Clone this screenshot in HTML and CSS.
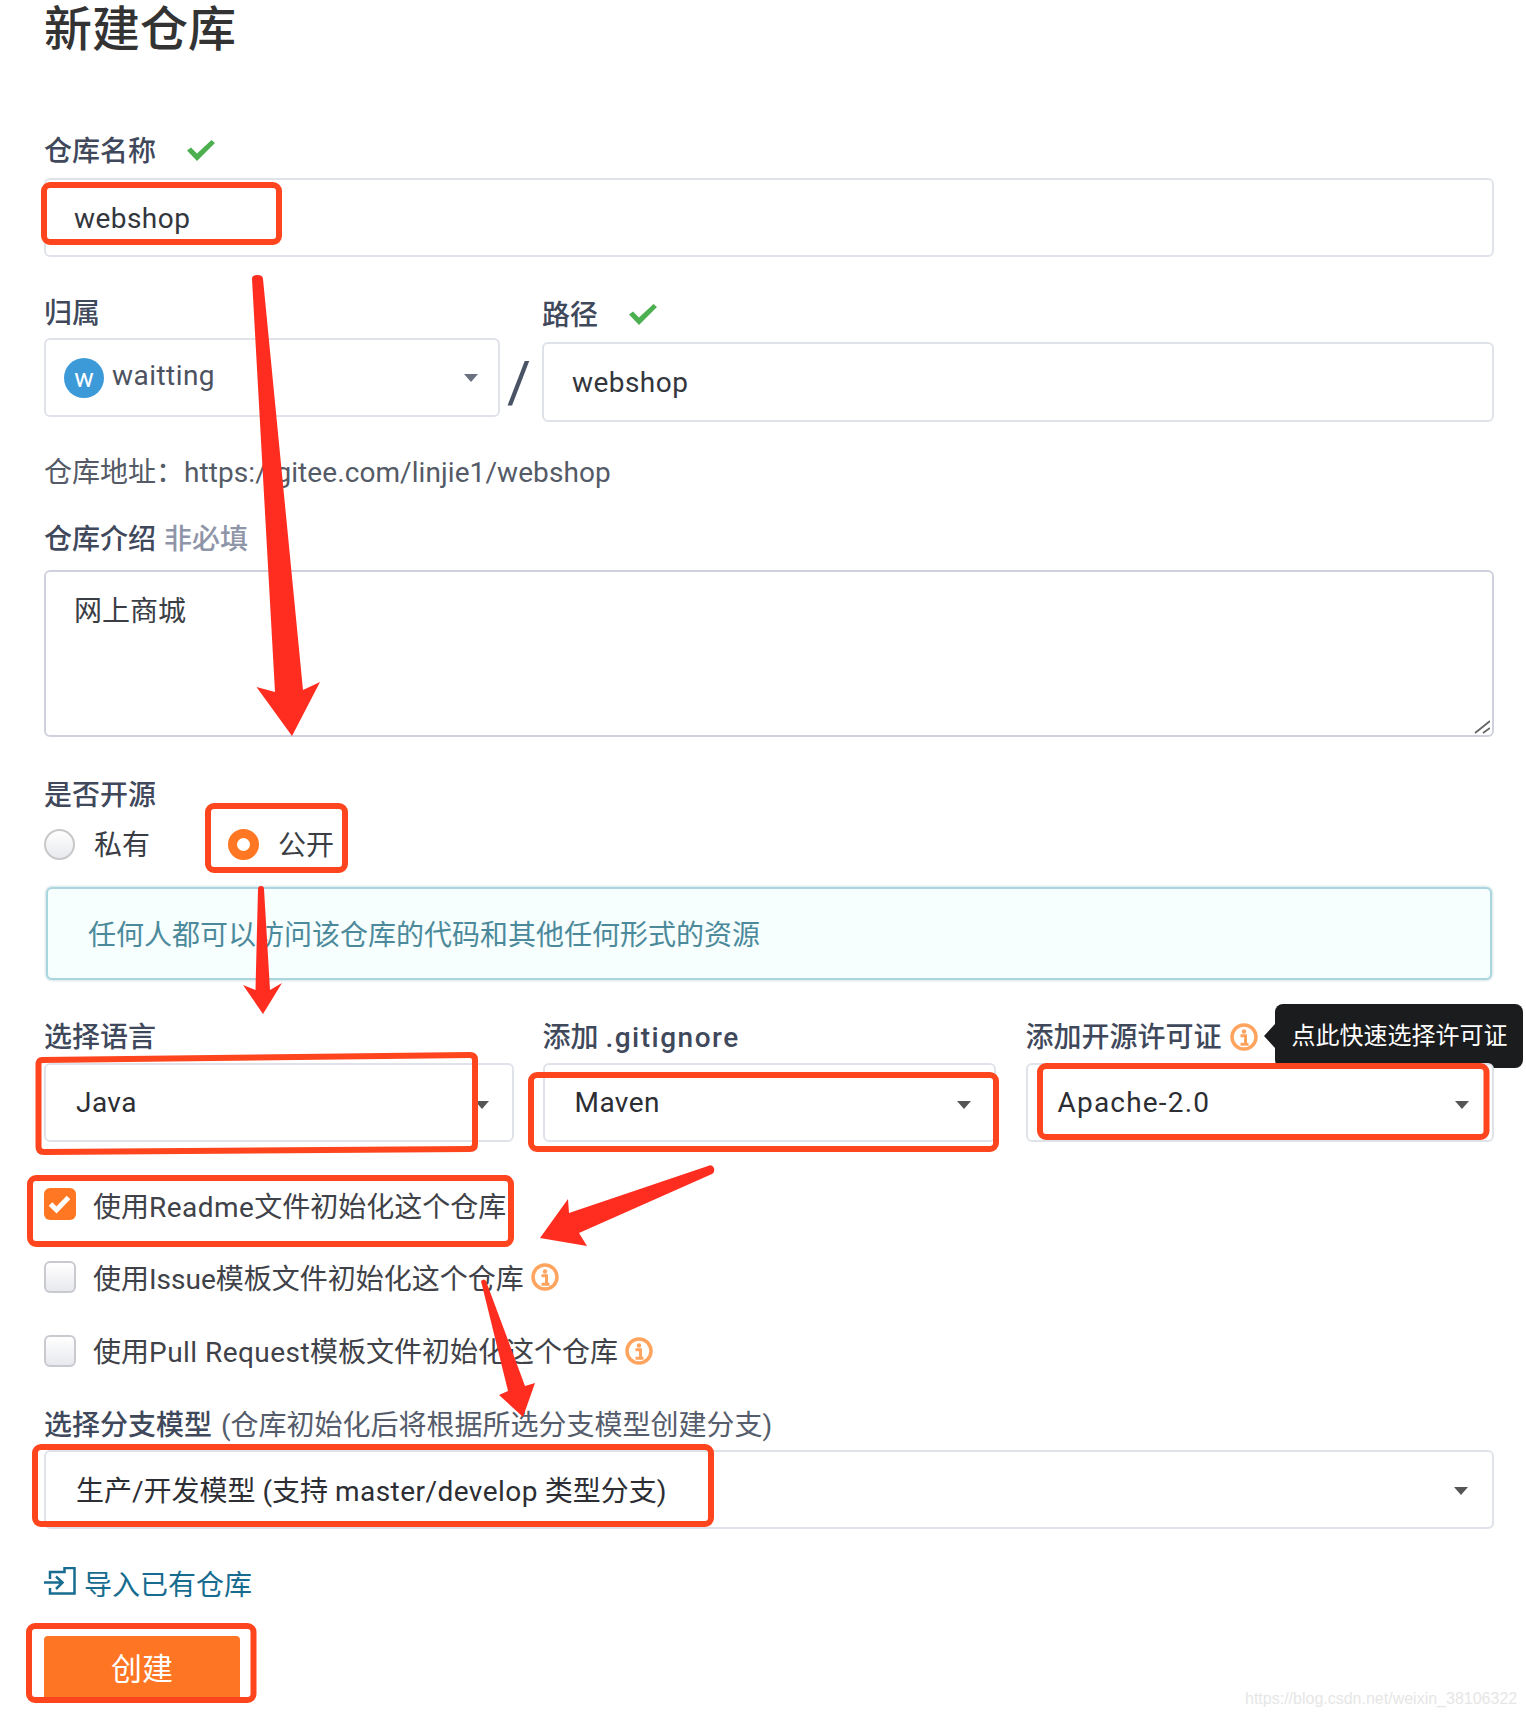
FILE: index.html
```html
<!DOCTYPE html>
<html lang="zh-CN">
<head>
<meta charset="utf-8">
<title>新建仓库</title>
<link rel="stylesheet" href="styles.css">
</head>
<body>
<main class="page">
  <h1 class="title">新建仓库</h1>

  <div class="label label-first"><span>仓库名称</span>
    <svg class="ok" viewBox="0 0 29 21"><path d="M1 10.500L5 7.500 11 13.500 25.500 0 29 3 11 21Z" /></svg>
  </div>
  <div class="field"><span class="value latin">webshop</span></div>

  <div class="owner-row">
    <div class="owner-col">
      <div class="label">归属</div>
      <div class="field select owner">
        <span class="avatar">w</span>
        <span class="owner-name latin">waitting</span>
        <span class="caret caret-light"></span>
      </div>
    </div>
    <span class="slash">/</span>
    <div class="path-col">
      <div class="label label-path"><span>路径</span>
        <svg class="ok" viewBox="0 0 29 21"><path d="M1 10.500L5 7.500 11 13.500 25.500 0 29 3 11 21Z" /></svg>
      </div>
      <div class="field field-path"><span class="value latin">webshop</span></div>
    </div>
  </div>

  <div class="address">仓库地址：<span class="url">https://gitee.com/linjie1/webshop</span></div>

  <div class="label label-intro"><span>仓库介绍</span><span class="optional">非必填</span></div>
  <div class="textarea">网上商城
    <svg class="grip" viewBox="0 0 16 14"><path d="M1 13L16 1M9 13L16 8" /></svg>
  </div>

  <div class="label label-open">是否开源</div>
  <div class="radios">
    <div class="radio-item"><span class="radio"></span><span class="radio-text">私有</span></div>
    <div class="radio-item"><span class="radio radio-on"></span><span class="radio-text">公开</span></div>
  </div>

  <div class="notice">任何人都可以访问该仓库的代码和其他任何形式的资源</div>

  <div class="triple">
    <div>
      <div class="label">选择语言</div>
      <div class="field select"><span class="value value-sel latin">Java</span><span class="caret"></span></div>
    </div>
    <div>
      <div class="label"><span>添加 <span class="latin-bold">.gitignore</span></span></div>
      <div class="field select"><span class="value value-sel latin">Maven</span><span class="caret"></span></div>
    </div>
    <div class="license">
      <div class="label"><span>添加开源许可证</span>
        <svg class="info info-label" viewBox="0 0 28 28"><circle cx="14" cy="14" r="12" /><circle class="dot" cx="14" cy="8.500" r="2.200" /><path d="M10.500 12.800H15.500V21M10.500 21.200H18.500" /></svg>
      </div>
      <div class="tooltip">点此快速选择许可证</div>
      <div class="field select"><span class="value value-sel latin-wide">Apache-2.0</span><span class="caret"></span></div>
    </div>
  </div>

  <div class="check-row row-a">
    <span class="box box-on"><svg viewBox="0 0 32 32"><path d="M6.500 16L12.500 22 24.500 9.500" /></svg></span>
    <span class="check-text">使用<span class="latin">Readme</span>文件初始化这个仓库</span>
  </div>
  <div class="check-row row-b">
    <span class="box"></span>
    <span class="check-text">使用Issue模板文件初始化这个仓库</span>
    <svg class="info" viewBox="0 0 28 28"><circle cx="14" cy="14" r="12" /><circle class="dot" cx="14" cy="8.500" r="2.200" /><path d="M10.500 12.800H15.500V21M10.500 21.200H18.500" /></svg>
  </div>
  <div class="check-row row-c">
    <span class="box"></span>
    <span class="check-text">使用<span class="latin">Pull Request</span>模板文件初始化这个仓库</span>
    <svg class="info" viewBox="0 0 28 28"><circle cx="14" cy="14" r="12" /><circle class="dot" cx="14" cy="8.500" r="2.200" /><path d="M10.500 12.800H15.500V21M10.500 21.200H18.500" /></svg>
  </div>

  <div class="label label-branch"><span>选择分支模型</span><span class="hint">(仓库初始化后将根据所选分支模型创建分支)</span></div>
  <div class="field select branch"><span class="value value-sel">生产/开发模型 (支持 <span class="latin">master/develop</span> 类型分支)</span><span class="caret"></span></div>

  <a class="import" href="#">
    <svg viewBox="0 0 32 28"><path d="M6 12V5H20.500V1H30.500V26.500H6V21M0 15.500H18M12 9.500L18.500 15.500 12 22" /></svg>
    <span>导入已有仓库</span>
  </a>

  <button class="create" type="button">创建</button>
</main>

<div class="watermark">https://blog.csdn.net/weixin_38106322</div>

<svg class="marks" viewBox="0 0 1526 1718">
  <g class="frames">
    <rect x="44" y="185" width="235" height="57" rx="6" />
    <rect x="208" y="806" width="137" height="64" rx="6" />
    <path d="M42 1060L470 1055Q475 1055 475 1060V1144Q475 1149 470 1149L44 1152Q38.500 1152 38.500 1147V1065Q38.500 1060 42 1060Z" />
    <rect x="531" y="1075" width="465" height="74" rx="6" />
    <rect x="1040" y="1066" width="446.500" height="71" rx="6" />
    <rect x="30" y="1178" width="481" height="66" rx="6" />
    <rect x="35" y="1447" width="676" height="77" rx="6" />
    <rect x="29" y="1626" width="224.500" height="74" rx="6" />
  </g>
  <g class="arrows">
    <path d="M252 279Q252 275 257 275Q263 275 263 279L303 690L320 682L292 736L256.500 687L275 692Z" />
    <path d="M258 889Q258 886 261 886Q264 886 264 889L270 990L282 983L263 1014L243 985L255.500 990Z" />
    <path d="M708 1166Q712 1164 714 1168Q715 1172 712 1174L579 1233L587 1246L540 1238L568 1199L569 1213Z" />
    <path d="M481 1281Q484 1278 486 1281L525 1386L535 1383L523 1417L499 1395L508 1391Z" />
  </g>
</svg>
</body>
</html>
```

FILE: styles.css
```css
* { box-sizing: border-box; }

html, body {
  margin: 0;
  padding: 0;
  background: #fff;
}

body {
  position: relative;
  height: 1718px;
  overflow: hidden;
  font-family: Roboto, "Noto Sans CJK SC", sans-serif;
  font-size: 28px;
  color: #3a3d44;
}

.page {
  width: 1450px;
  margin-left: 44px;
}

.title {
  margin: 0;
  height: 58px;
  padding-top: 1px;
  font-size: 48px;
  line-height: 58px;
  font-weight: 500;
  color: #333;
}

.label {
  display: flex;
  align-items: center;
  height: 34px;
  margin-bottom: 9px;
  padding-top: 3px;
  font-size: 28px;
  line-height: 34px;
  font-weight: 500;
  color: #40485b;
  white-space: pre;
}

.label-first { margin-top: 75px; margin-bottom: 11px; }
.label-path { margin-bottom: 11px; }
.label-intro { margin-top: 31px; margin-bottom: 15px; }
.label-open { margin-top: 40px; margin-bottom: 18px; }
.label-branch { margin-top: 40px; margin-bottom: 9px; }

.triple .label { padding-top: 1px; }

.latin { letter-spacing: 0.45px; }
.latin-wide { letter-spacing: 1.200px; }
.latin-bold { letter-spacing: 1.500px; }
.url { letter-spacing: 0.08px; }

.ok {
  width: 29px;
  height: 21px;
  margin-left: 30px;
  margin-top: -3px;
  fill: #4caf50;
}

.field {
  position: relative;
  display: flex;
  align-items: center;
  height: 79px;
  padding: 0 28px;
  border: 2px solid #dfe3e9;
  border-radius: 6px;
  background: #fff;
}

.value {
  position: relative;
  top: 1px;
  color: #33363c;
}

.field-path .value { top: 0; }

.value-sel {
  top: 0;
  padding-left: 2px;
  color: #2c2e33;
}

.owner-row {
  display: flex;
  margin-top: 38px;
}

.owner-col { width: 456px; }

.owner {
  padding: 0 18px;
}

.avatar {
  display: flex;
  align-items: center;
  justify-content: center;
  width: 40px;
  height: 40px;
  border-radius: 50%;
  background: #3d9ad9;
  color: #fff;
  font-size: 26px;
  line-height: 40px;
}

.owner-name {
  margin-left: 8px;
  margin-top: -5px;
  color: #4d5260;
}

.slash {
  width: 38px;
  height: 50px;
  margin-top: 62px;
  margin-right: 4px;
  text-align: center;
  font-size: 58px;
  line-height: 50px;
  font-weight: 400;
  color: #4a5366;
}

.path-col {
  flex: 1;
  padding-top: 2px;
}

.field-path { height: 80px; }

.caret {
  position: absolute;
  right: 23px;
  top: 36px;
  width: 0;
  height: 0;
  border-left: 7px solid transparent;
  border-right: 7px solid transparent;
  border-top: 8px solid #555;
}

.caret-light {
  right: 20px;
  top: 34px;
  border-top-color: #6a7080;
}

.address {
  height: 34px;
  margin-top: 34px;
  line-height: 34px;
  color: #545a66;
}

.optional {
  margin-left: 8px;
  color: #8f95a8;
}

.textarea {
  position: relative;
  height: 167px;
  padding: 22px 28px;
  border: 2px solid #cfd2dc;
  border-radius: 6px;
  line-height: 36px;
  color: #3a3d44;
}

.grip {
  position: absolute;
  right: 2px;
  bottom: 1px;
  width: 16px;
  height: 14px;
}

.grip path {
  fill: none;
  stroke: #666;
  stroke-width: 1.800;
}

.radios {
  display: flex;
  height: 31px;
}

.radio-item {
  display: flex;
  align-items: center;
  line-height: 31px;
  color: #3a3d44;
}

.radio-item + .radio-item { margin-left: 78px; }

.radio-text {
  position: relative;
  top: 1px;
}

.radio {
  width: 31px;
  height: 31px;
  margin-right: 19px;
  border: 2px solid #c8c8c8;
  border-radius: 50%;
  background: linear-gradient(#fff, #e8e9ee);
}

.radio-on {
  margin-right: 19px;
  border: 9px solid #ff7722;
  background: #fff;
}

.notice {
  display: flex;
  align-items: center;
  width: 1446px;
  height: 93px;
  margin: 27px 0 0 2px;
  padding: 0 0 2px 40px;
  border: 2px solid #a9d5de;
  border-radius: 6px;
  background: #f6fefe;
  box-shadow: 0 0 0 1.500px #e3eef0;
  color: #4c8a9b;
}

.triple {
  display: grid;
  grid-template-columns: 469.500px 453px 469px;
  column-gap: 29px;
  margin-top: 40px;
}

.triple > :nth-child(3) { margin-left: 1px; }

.license { position: relative; }

.info {
  flex: none;
  width: 28px;
  height: 28px;
}

.info-label { margin-left: 8px; margin-top: -1px; }

.info circle {
  fill: none;
  stroke: #ffa45f;
  stroke-width: 3.500;
}

.info .dot {
  fill: #ffa45f;
  stroke: none;
}

.info path {
  fill: none;
  stroke: #ffa45f;
  stroke-width: 3;
}

.tooltip {
  position: absolute;
  left: 249px;
  top: -16px;
  width: 248px;
  height: 64px;
  padding-left: 17px;
  border-radius: 8px;
  background: #1b1c1d;
  color: #fff;
  font-size: 24px;
  line-height: 64px;
}

.tooltip::before {
  content: "";
  position: absolute;
  left: -11px;
  top: 20px;
  border-top: 12px solid transparent;
  border-bottom: 12px solid transparent;
  border-right: 11px solid #1b1c1d;
}

.check-row {
  display: flex;
  align-items: center;
  height: 32px;
  color: #3f4248;
}

.row-a { margin-top: 46px; }
.row-b { margin-top: 41px; }
.row-c { margin-top: 42px; }

.box {
  flex: none;
  width: 32px;
  height: 32px;
  margin-right: 17px;
  border: 2px solid #c8cad0;
  border-radius: 6px;
  background: linear-gradient(#fff, #e8e9ee);
}

.box-on {
  border: none;
  background: #ff7722;
}

.box-on svg {
  display: block;
  width: 32px;
  height: 32px;
}

.box-on path {
  fill: none;
  stroke: #fff;
  stroke-width: 5;
}

.check-text {
  position: relative;
  top: 4px;
  margin-right: 7px;
  line-height: 36px;
  white-space: nowrap;
}

.row-b .check-text { top: 3px; }
.row-c .check-text { top: 2px; }

.hint {
  margin-left: 9px;
  font-weight: 400;
  color: #555c6b;
}

.branch .caret { top: 35px; right: 24px; }
.branch .value-sel { top: -1px; }

.import {
  display: flex;
  align-items: center;
  gap: 8px;
  height: 34px;
  margin-top: 37px;
  color: #176c8f;
  text-decoration: none;
}

.import svg {
  width: 32px;
  height: 28px;
  margin-top: -4px;
}

.import path {
  fill: none;
  stroke: #176c8f;
  stroke-width: 2.500;
}

.create {
  display: block;
  width: 196px;
  height: 64px;
  margin-top: 36px;
  padding: 4px 0 0;
  border: none;
  border-radius: 4px;
  background: #fe7624;
  color: #fff;
  font-family: inherit;
  font-size: 31px;
  line-height: 60px;
}

.watermark {
  position: absolute;
  left: 1245px;
  top: 1689px;
  font-family: "Liberation Sans", sans-serif;
  font-size: 16px;
  line-height: 20px;
  color: #e6e6e6;
  white-space: nowrap;
}

.marks {
  position: absolute;
  left: 0;
  top: 0;
  width: 1526px;
  height: 1718px;
  pointer-events: none;
}

.frames rect,
.frames path {
  fill: none;
  stroke: #ff451e;
  stroke-width: 6;
}

.arrows path {
  fill: #ff2d1f;
}
```
